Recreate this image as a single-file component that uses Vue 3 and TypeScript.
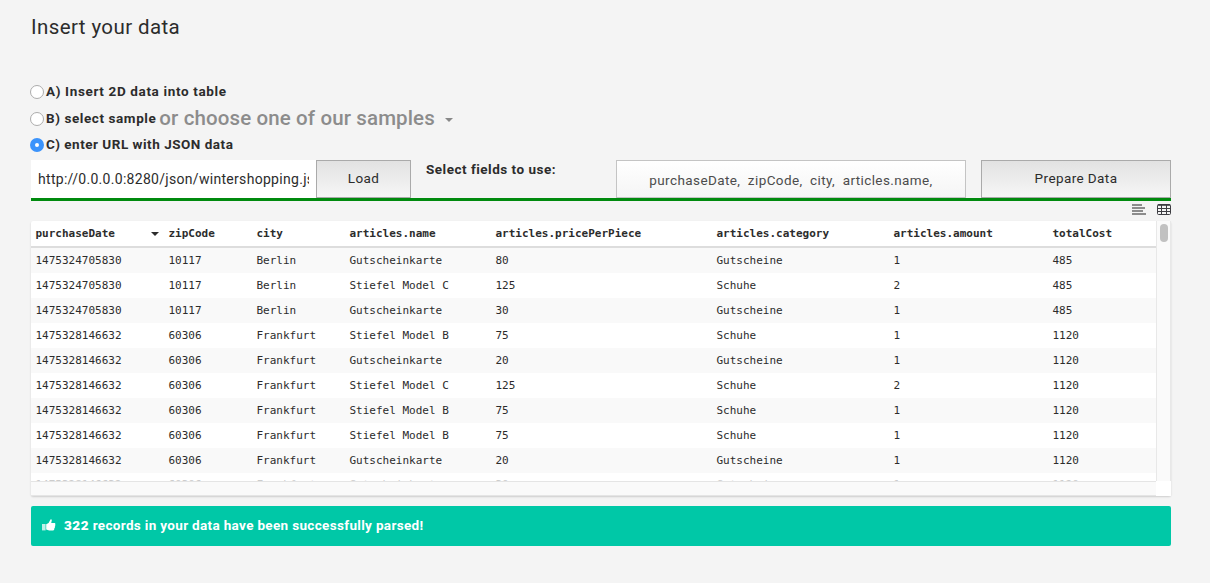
<script setup lang="ts">
import { ref } from 'vue'

type Mode = 'table' | 'sample' | 'url'

const mode = ref<Mode>('url')
const url = ref('http://0.0.0.0:8280/json/wintershopping.json')

const columns = [
  'purchaseDate', 'zipCode', 'city', 'articles.name',
  'articles.pricePerPiece', 'articles.category', 'articles.amount', 'totalCost',
]

const berlin = ['1475324705830', '10117', 'Berlin']
const frankfurt = ['1475328146632', '60306', 'Frankfurt']

const rows: string[][] = [
  [...berlin, 'Gutscheinkarte', '80', 'Gutscheine', '1', '485'],
  [...berlin, 'Stiefel Model C', '125', 'Schuhe', '2', '485'],
  [...berlin, 'Gutscheinkarte', '30', 'Gutscheine', '1', '485'],
  [...frankfurt, 'Stiefel Model B', '75', 'Schuhe', '1', '1120'],
  [...frankfurt, 'Gutscheinkarte', '20', 'Gutscheine', '1', '1120'],
  [...frankfurt, 'Stiefel Model C', '125', 'Schuhe', '2', '1120'],
  [...frankfurt, 'Stiefel Model B', '75', 'Schuhe', '1', '1120'],
  [...frankfurt, 'Stiefel Model B', '75', 'Schuhe', '1', '1120'],
  [...frankfurt, 'Gutscheinkarte', '20', 'Gutscheine', '1', '1120'],
  [...frankfurt, 'Gutscheinkarte', '30', 'Gutscheine', '1', '1120'],
]
</script>

<template>
  <main class="page">
    <h1 class="title"><span>Insert your data</span></h1>

    <div class="options">
      <label class="option">
        <i class="radio" :class="{ on: mode === 'table' }" @click="mode = 'table'"></i>
        <span class="label opt-a">A) Insert 2D data into table</span>
      </label>
      <label class="option option-b">
        <i class="radio" :class="{ on: mode === 'sample' }" @click="mode = 'sample'"></i>
        <span class="label opt-b">B) select sample</span>
        <span class="samples">or choose one of our samples</span>
        <i class="caret grey"></i>
      </label>
      <label class="option">
        <i class="radio" :class="{ on: mode === 'url' }" @click="mode = 'url'"></i>
        <span class="label opt-c">C) enter URL with JSON data</span>
      </label>
    </div>

    <div class="controls">
      <div class="url"><div class="url-text">{{ url }}</div></div>
      <button class="btn load"><span>Load</span></button>
      <span class="label fields-label">Select fields to use:</span>
      <div class="fields"><span>purchaseDate,&nbsp; zipCode,&nbsp; city,&nbsp; articles.name,</span></div>
      <button class="btn prepare"><span>Prepare Data</span></button>
    </div>

    <div class="tools">
      <svg class="tool-lines" width="14" height="11" viewBox="0 0 14 11">
        <path d="M0 1h10M0 4h13M0 7h11M0 10h14" stroke="#8c8c8c" stroke-width="2" fill="none" />
      </svg>
      <svg width="14" height="11" viewBox="0 0 14 11">
        <rect x="0.5" y="0.5" width="13" height="10" rx="1" fill="#f4f4f4" stroke="#3d3d42" />
        <path d="M1 1h12" stroke="#3d3d42" stroke-width="1.6" />
        <path d="M1 4.5h12M1 7.5h12" stroke="#3d3d42" fill="none" />
        <path d="M4.5 1v9M9.5 1v9" stroke="#3d3d42" fill="none" />
      </svg>
    </div>

    <section class="grid">
      <div class="grid-body">
        <div class="row head">
          <div v-for="(c, i) in columns" :key="c" class="cell">
            {{ c }}<i v-if="i === 0" class="caret"></i>
          </div>
        </div>
        <div v-for="(r, i) in rows" :key="i" class="row data">
          <div v-for="(v, j) in r" :key="j" class="cell">{{ v }}</div>
        </div>
      </div>
      <div class="vbar"><div class="thumb"></div></div>
      <div class="hbar"></div>
      <div class="corner"></div>
    </section>

    <div class="alert">
      <svg width="14" height="12" viewBox="0 0 14 12">
        <path d="M0 5h3.6v6.4H0z" fill="#fff" opacity=".75" />
        <path d="M4.2 5.2L6.6 4 8.2.9C8.6-.2 9.8.2 9.8 1.5L9.2 4.1H12.2C13.6 4.1 13.6 5.5 13 6c.5.5.3 1.4-.2 1.7.3.6 0 1.3-.5 1.6.2.7-.2 2.2-1.3 2.2H7.2L4.2 10.6z" fill="#fff" />
      </svg>
      <span class="alert-text"><b>322</b> records in your data have been successfully parsed!</span>
    </div>
  </main>
</template>

<style>
html,
body {
  background: #f4f4f4;
}
</style>

<style scoped>
.page {
  box-sizing: border-box;
  height: 583px;
  padding: 0 39px 0 31px;
  overflow: hidden;
  background: #f4f4f4;
  color: #2c2c2c;
  font-family: Roboto, 'Liberation Sans', sans-serif;
  font-size: 14px;
}
.title {
  margin: 0;
  height: 78px;
  line-height: 55px;
  font-size: 20.5px;
  font-weight: 400;
  letter-spacing: 0.4px;
}
.options {
  height: 82px;
  margin-left: -1px;
}
.option {
  display: flex;
  align-items: center;
  height: 27px;
}
.option-b {
  height: 26px;
}
.radio {
  box-sizing: border-box;
  flex: none;
  width: 14px;
  height: 14px;
  margin: 1px 2px 0 0;
  border: 1px solid #acacac;
  border-radius: 50%;
  background: #fff;
}
.radio.on {
  border: 5px solid #3b93fb;
}
.label {
  font-size: 13.5px;
  font-weight: 700;
  letter-spacing: 0.5px;
  white-space: nowrap;
}
.opt-a {
  margin-bottom: 2px;
  letter-spacing: 0.64px;
}
.opt-b {
  letter-spacing: 0.58px;
}
.opt-c {
  margin-bottom: 2px;
  letter-spacing: 0.51px;
}
.samples {
  margin-left: 3px;
  font-size: 20.5px;
  font-weight: 500;
  letter-spacing: 0.12px;
  color: #8c8c8c;
  white-space: nowrap;
}
.caret {
  flex: none;
  width: 0;
  height: 0;
  border: 4px solid transparent;
  border-top-color: #2c2c2c;
  border-bottom: 0;
}
.caret.grey {
  margin: 3px 0 0 10px;
  border-top-color: #888;
}
.controls {
  display: flex;
  height: 38px;
  border-bottom: 3px solid #008a0e;
}
.url {
  box-sizing: border-box;
  width: 285px;
  padding: 0 7px;
  background: #fff;
}
.url-text {
  overflow: hidden;
  line-height: 39px;
  letter-spacing: 0.3px;
  white-space: nowrap;
}
.btn {
  box-sizing: border-box;
  height: 38px;
  padding: 0 0 2px;
  border: 1px solid #aaa;
  background: linear-gradient(#e2e2e2, #f6f6f6);
  color: #2c2c2c;
  font: inherit;
  font-size: 13.5px;
  letter-spacing: 0.4px;
}
.load {
  width: 95px;
}
.fields-label {
  width: 205px;
  padding-left: 15px;
  box-sizing: border-box;
  line-height: 19px;
}
.fields {
  box-sizing: border-box;
  width: 350px;
  margin-right: 15px;
  border: 1px solid #c4c4c4;
  background: linear-gradient(#fff, #f5f5f5);
  color: #4c4c4c;
  font-size: 13.5px;
  line-height: 39px;
  letter-spacing: 0.4px;
  text-align: center;
  white-space: nowrap;
}
.prepare {
  width: 190px;
}
.tools {
  display: flex;
  justify-content: flex-end;
  gap: 11px;
  height: 17px;
  padding-top: 3px;
}
.grid {
  display: grid;
  grid-template: 260px 15px / 1125px 15px;
  background: #fff;
  border-radius: 2px;
  box-shadow: 0 1px 2px rgba(0, 0, 0, 0.16);
  font-family: 'DejaVu Sans Mono', 'Liberation Mono', monospace;
  font-size: 11px;
}
.grid-body {
  overflow: hidden;
}
.row {
  display: grid;
  grid-template-columns: 133px 88px 93px 146px 221px 177px 159px 108px;
  height: 25px;
  line-height: 25px;
}
.head {
  border-bottom: 2px solid #ddd;
  font-weight: 700;
}
.data:nth-child(even) {
  background: #f9f9f9;
}
.data:last-child {
  height: 23px;
  line-height: 23px;
  color: #ccc;
}
.cell {
  display: flex;
  align-items: center;
  justify-content: space-between;
  padding-left: 4.5px;
  white-space: nowrap;
}
.cell .caret {
  margin-right: 5px;
}
.vbar {
  box-sizing: border-box;
  padding: 3px 0 0 3px;
  border: solid #e8e8e8;
  border-width: 0 1px;
  background: #fafafa;
}
.thumb {
  width: 8px;
  height: 18px;
  border-radius: 4px;
  background: #c1c1c1;
}
.hbar {
  box-sizing: border-box;
  border: solid #e5e5e5;
  border-width: 1px 0;
  background: #fafafa;
}
.corner {
  background: #fff;
}
.alert {
  display: flex;
  align-items: center;
  box-sizing: border-box;
  height: 40px;
  margin-top: 10px;
  padding: 0 0 2px 11px;
  border-radius: 2px;
  background: #00c8a7;
  color: #fff;
}
.alert-text {
  margin-left: 8px;
  font-size: 13.5px;
  font-weight: 700;
  letter-spacing: 0.33px;
  white-space: pre;
}
.alert-text b {
  font-weight: 900;
  letter-spacing: 0.5px;
}
</style>
